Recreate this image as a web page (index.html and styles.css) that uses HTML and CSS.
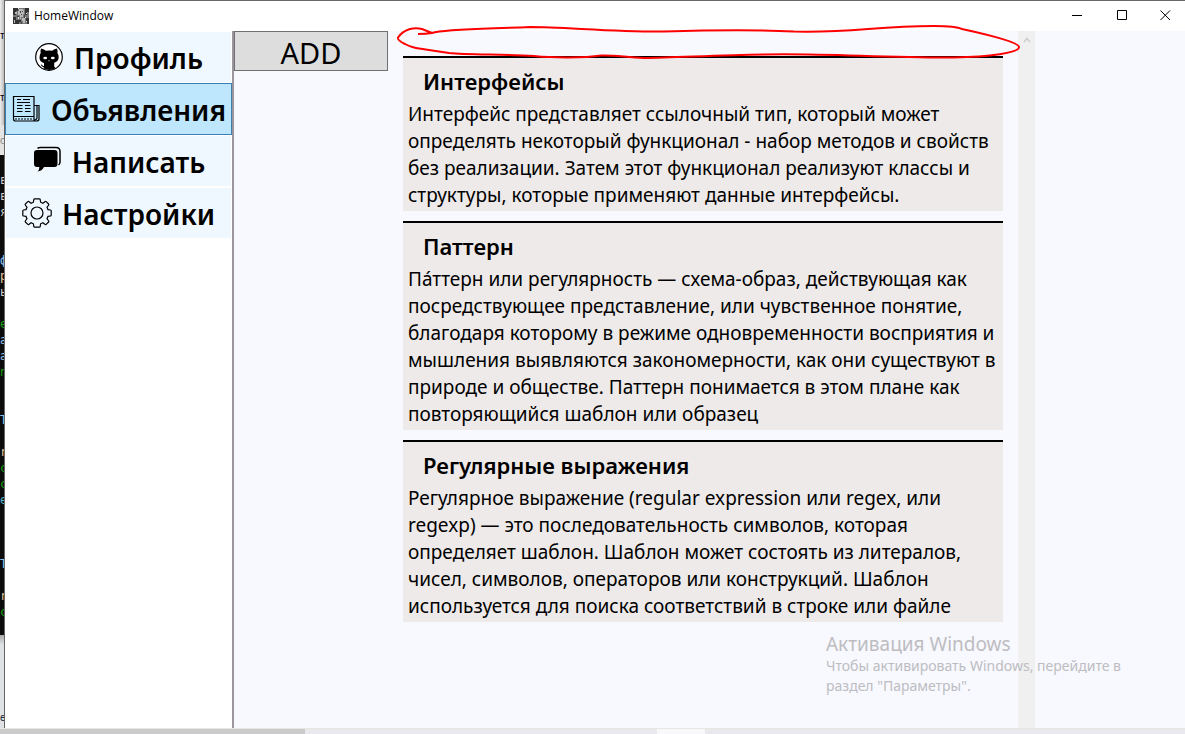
FILE: index.html
```html
<!DOCTYPE html>
<html lang="ru">
<head>
<meta charset="utf-8">
<title>HomeWindow</title>
<link rel="stylesheet" href="styles.css">
</head>
<body>
<div class="desktop">
  <div class="behind" aria-hidden="true">
    <div class="behind-tabs"><span>т</span><span>т</span></div>
    <div class="behind-label">с</div>
    <pre class="console">в
в
я


<i class="blue">ф</i>
<i class="sand">р</i>
ь

<i class="green">e</i>
<i class="blue">а</i>
<i class="blue">а</i>
<i class="green">n</i>


<i class="blue">T</i>

<i class="sand">r</i>
<i class="green">c</i>
<i class="green">c</i>
<i class="cyan">e</i>



<i class="blue">T</i>

<i class="sand">r</i>
<i class="green">c</i></pre>
    <div class="behind-foot">е</div>
  </div>
  <div class="window">
    <header class="titlebar">
      <svg class="app-icon" viewBox="0 0 16 16" shape-rendering="crispEdges">
        <rect width="16" height="16" fill="#777"/>
        <path d="M0 0h5v3h-2v4h-3zM0 9h3v3h2v4h-5zM12 0h4v4h-2v3h-2zM5 12h3v2h-2v2h-1zM13 10h3v6h-2z" fill="#333"/>
        <path d="M6 1h4v1h1v4h-1v3h-2v2h-1v-4h-2v-4h1zM9 10h3v5h-2v-2h-1zM2 4h2v2h-2zM1 12h1v3h-1z" fill="#bbb"/>
        <path d="M7 3h1v2h-1zM9 3h1v1h-1zM4 8h2v1h-2zM8 6h1v1h-1zM11 7h1v3h-1zM3 2h1v1h-1zM8 14h1v2h-1z" fill="#444"/>
        <path d="M5 0h1v1h-1zM13 5h1v1h-1zM12 9h1v1h-1zM5 9h1v2h-1zM13 13h1v1h-1z" fill="#ddd"/>
      </svg>
      <h1 class="title">HomeWindow</h1>
      <div class="controls">
        <button class="control" aria-label="Свернуть"><svg viewBox="0 0 11 11"><path d="M0 5.500h10"/></svg></button>
        <button class="control" aria-label="Развернуть"><svg viewBox="0 0 11 11"><path d="M.5.500h9v9h-9z"/></svg></button>
        <button class="control" aria-label="Закрыть"><svg viewBox="0 0 11 11"><path d="M.5.500l9.500 9.500M10 .5L.5 10"/></svg></button>
      </div>
    </header>
    <div class="main">
      <nav class="sidebar">
        <button class="nav-item">
          <svg class="nav-icon" viewBox="0 0 30 30"><circle cx="15" cy="15" r="13.300" fill="#fff" stroke="#000" stroke-width="1.200"/><path d="M7 6.400q2.800.2 4.800 2.300 3.200-.6 6.400 0 2-2.100 4.800-2.300.9 2.400.4 4.600 1.500 2 1.300 4.600-.5 4.400-4.500 5.200v3.600l1.500 1.900q-6 3-12 .3v-1.700q-2 0-3-2.200.7-.7 1.500.3.900 1.200 1.800.9v-3q-4.300-1-4.500-5.200-.1-2.700 1.200-4.700-.4-2.400.3-4.600z"/><ellipse cx="11.200" cy="16" rx="1.900" ry="1.300" fill="#fff"/><ellipse cx="18.800" cy="16" rx="1.900" ry="1.300" fill="#fff"/><path d="M14 18.500h2l-1 1z" fill="#fff"/></svg>
          <span>Профиль</span>
        </button>
        <button class="nav-item selected" aria-current="page">
          <svg class="nav-icon line" viewBox="0 0 30 30"><path d="M2.500 2.500h20.500v24.500h-18.500q-2 0-2-2zM23 11.500h5V25q0 2-2.500 2h-2.500M26 12v12q-.5 2-2.500 2M2.500 22.500h20"/><path d="M6 5.500h4M12 5.500h7M6 8.500h13"/><path d="M6 11.500h5.500M14 11.500h5.500M6 14.500h5.500M14 14.500h5.500M6 17.500h5.500M14 17.500h5.500"/><path d="M4.500 25h17" stroke-dasharray="1 2" stroke-width="2"/></svg>
          <span>Объявления</span>
        </button>
        <button class="nav-item">
          <svg class="nav-icon" viewBox="0 0 30 30"><path d="M5 4h17.500q3 0 3 3v11q0 3-3 3H12q-2 4-6.500 4.600 2-1.800 1.800-4.600H5q-3 0-3-3V7q0-3 3-3z"/><path d="M5.500 2.300q1-.8 3-.8h15.500q4 0 4 4v10.500q0 2-1.500 3" fill="none" stroke="#000" stroke-width="1.500"/></svg>
          <span>Написать</span>
        </button>
        <button class="nav-item">
          <svg class="nav-icon line" viewBox="0 0 30 30"><path d="M12.500.8h5q.6 0 .7.700l.4 2.700 2.300 1 2.300-1.700q.5-.3 1 .1l2.400 2.400q.5.500.1 1l-1.700 2.300 1 2.300 2.500.4q.7.100.7.700v4.600q0 .6-.7.700l-2.500.4-1 2.300 1.700 2.300q.4.500-.1 1l-2.400 2.400q-.5.400-1 .1l-2.300-1.700-2.300 1-.4 2.700q-.1.700-.7.700h-5q-.6 0-.7-.7l-.4-2.700-2.300-1-2.300 1.700q-.5.300-1-.1l-2.400-2.400q-.5-.5-.1-1l1.700-2.300-1-2.300-2.500-.4q-.7-.1-.7-.7v-4.600q0-.6.700-.7l2.500-.4 1-2.300-1.700-2.300q-.4-.5.100-1l2.400-2.400q.5-.4 1-.1l2.300 1.700 2.300-1 .4-2.700q.1-.7.700-.7z"/><circle cx="15" cy="15" r="6"/></svg>
          <span>Настройки</span>
        </button>
      </nav>
      <main class="content">
        <div class="toolbar"><button class="add">ADD</button></div>
        <div class="feed">
          <div class="posts">
            <article class="post">
              <h2>Интерфейсы</h2>
              <p>Интерфейс представляет ссылочный тип, который может<br>определять некоторый функционал - набор методов и свойств<br>без реализации. Затем этот функционал реализуют классы и<br>структуры, которые применяют данные интерфейсы.</p>
            </article>
            <article class="post">
              <h2>Паттерн</h2>
              <p>Па́ттерн или регулярность — схема-образ, действующая как<br>посредствующее представление, или чувственное понятие,<br>благодаря которому в режиме одновременности восприятия и<br>мышления выявляются закономерности, как они существуют в<br>природе и обществе. Паттерн понимается в этом плане как<br>повторяющийся шаблон или образец</p>
            </article>
            <article class="post">
              <h2>Регулярные выражения</h2>
              <p>Регулярное выражение (regular expression или regex, или<br>regexp) — это последовательность символов, которая<br>определяет шаблон. Шаблон может состоять из литералов,<br>чисел, символов, операторов или конструкций. Шаблон<br>используется для поиска соответствий в строке или файле</p>
            </article>
          </div>
          <div class="scrollbar"><svg viewBox="0 0 8 6"><path d="M1 5l3-3.500L7 5"/></svg></div>
        </div>
      </main>
    </div>
  </div>
  <div class="bottom-strip"><div class="bottom-thumb"></div><div class="bottom-gap"></div></div>
  <svg class="scribble" viewBox="0 0 630 40" aria-hidden="true"><path d="M24 14Q32 14 38 13C50 9 90 9 136 7C170 7 220 12 270 11.500C320 10 370 10 400 11.500C460 13 480 6 540 6Q562 6 568 9C600 16 625 23 625 27C625 33 595 37 560 37.500C490 38 430 33 370 34.500C320 35 280 38 250 38C230 37 220 35 207 35.500C190 38 160 38 140 36C110 34 75 35 55 33C25 28 20 29 11 24Q3 20 4 17.500C10 9 20 7 28 9L38 13"/></svg>
  <aside class="watermark"><strong>Активация Windows</strong><p>Чтобы активировать Windows, перейдите в<br>раздел "Параметры".</p></aside>
</div>
</body>
</html>
```
FILE: styles.css
```css
* { box-sizing: border-box; }
body {
  margin: 0;
  color: #000;
  font-family: "Noto Sans", "Open Sans", sans-serif;
}
button { margin: 0; font: inherit; color: inherit; }
h1, h2, p, pre { margin: 0; }

.desktop {
  position: relative;
  display: grid;
  grid-template-columns: 5px minmax(0, 1fr);
  grid-template-rows: minmax(0, 1fr) 6px;
  height: 100vh;
  overflow: hidden;
}

.behind {
  display: flex;
  flex-direction: column;
  overflow: hidden;
  border-right: 1px solid #666;
  background: #d8d8d8;
  font-size: 10px;
  line-height: 16px;
}
.behind-tabs {
  display: flex;
  flex: 0 0 125px;
  flex-direction: column;
  gap: 46px;
  padding-top: 27px;
  background: linear-gradient(90deg, #eee, #bbb);
}
.behind-label { flex: 0 0 30px; padding-top: 7px; color: #888; background: #e4e4e4; }
.console {
  flex: 0 0 480px;
  padding-top: 17px;
  background: #0c0c0c;
  color: #ccc;
  font: 12px/16px "DejaVu Sans Mono", monospace;
}
.console i { font-style: normal; }
.console .blue { color: #8fc3ee; }
.console .green { color: #13a10e; }
.console .sand { color: #e3c79a; }
.console .cyan { color: #4eb5c5; }
.behind-foot {
  flex: 1;
  padding-top: 74px;
  background: linear-gradient(#aaa, #dfe2e4 10px);
  color: #234;
}

.window {
  display: flex;
  flex-direction: column;
  min-width: 0;
  border-top: 1px solid #6b686b;
  background: #fff;
}
.titlebar {
  display: flex;
  flex: 0 0 30px;
  align-items: center;
  padding-left: 8px;
}
.app-icon { width: 16px; height: 16px; }
.title {
  margin-left: 5px;
  font-family: "Open Sans", "Noto Sans", sans-serif;
  font-size: 12px;
  font-weight: 400;
  line-height: 16px;
}
.controls { display: flex; align-self: stretch; margin-left: auto; }
.control {
  display: flex;
  align-items: center;
  justify-content: center;
  width: 45px;
  padding: 0 0 2px;
  border: 0;
  background: none;
}
.control:last-child { width: 40px; }
.control svg { width: 11px; height: 11px; fill: none; stroke: #000; }

.main { display: flex; flex: 1; min-height: 0; }
.sidebar {
  flex: 0 0 229px;
  border-right: 2px solid #9a969c;
  background: #fff;
}
.nav-item {
  display: flex;
  align-items: center;
  justify-content: center;
  gap: 10px;
  width: 100%;
  height: 52px;
  padding: 0;
  border: 1px solid #fff;
  background: #f0f8ff;
  font-size: 28px;
  font-weight: 600;
  line-height: 48px;
}
.nav-item span { padding-top: 2px; }
.nav-item.selected { border-color: #3c7fb1; background: #bee6fd; }
.nav-icon { flex: none; width: 30px; height: 30px; }
.nav-icon.line { fill: none; stroke: #000; stroke-width: 1.200px; }

.content {
  display: grid;
  flex: 1;
  grid-template-columns: 154px minmax(0, 1fr) 150px;
  min-width: 0;
  background: #f8f8ff;
}
.add {
  display: block;
  width: 100%;
  height: 40px;
  padding: 4px 0 0;
  border: 1px solid #707070;
  background: #ddd;
  font-size: 29px;
  line-height: 34px;
}
.feed { display: flex; }
.posts {
  display: flex;
  flex: 1;
  flex-direction: column;
  gap: 10px;
  min-width: 0;
  padding: 25px 15px 0;
}
.post {
  padding: 0 5px 2px;
  border-top: 2px solid #000;
  background: #eeeae9;
}
.post h2 { padding: 9px 15px 6px; font-size: 22px; font-weight: 600; line-height: 28px; }
.post p { font-size: 19px; line-height: 27px; white-space: nowrap; }
.scrollbar { flex: 0 0 17px; background: #f0f0f0; text-align: center; line-height: 12px; }
.scrollbar svg { width: 8px; height: 6px; fill: none; stroke: #ccc; stroke-width: 1.500px; }

.bottom-strip { display: flex; grid-column: 1 / -1; border-top: 1px solid #e4e8e0; background: #e9e9ed; }
.bottom-thumb { width: 305px; background: #cacaca; }
.bottom-gap { width: 48px; margin-left: 352px; background: #f8f8fa; }

.scribble {
  position: absolute;
  top: 20px;
  left: 394px;
  width: 630px;
  height: 40px;
  fill: none;
  stroke: #f00;
  stroke-width: 2px;
  pointer-events: none;
}
.watermark {
  position: absolute;
  right: 57px;
  bottom: 38px;
  width: 302px;
  color: #bdbdc1;
  font-size: 14px;
  line-height: 20px;
  white-space: nowrap;
  pointer-events: none;
}
.watermark strong { display: block; font-size: 19px; font-weight: 400; line-height: 24px; }
```
